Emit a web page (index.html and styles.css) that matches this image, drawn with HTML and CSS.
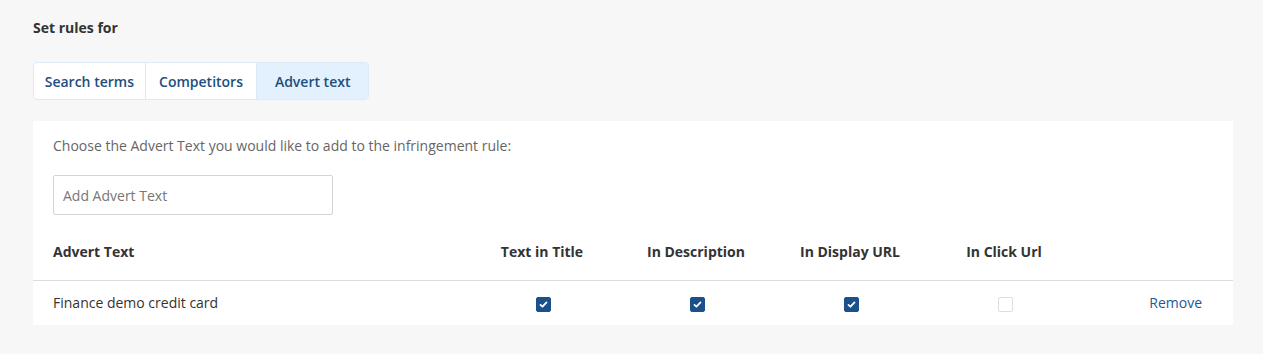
FILE: index.html
```html
<!DOCTYPE html>
<html lang="en">
<head>
    <meta charset="UTF-8">
    <title>Set rules</title>
    <link rel="stylesheet" href="styles.css">
</head>
<body>
    <h4 class="title">Set rules for</h4>

    <!-- Abas -->
    <div class="tabs">
        <div class="tab">Search terms</div>
        <div class="tab">Competitors</div>
        <div class="tab active">Advert text</div>
    </div>

    <div class="panel">
        <div class="intro">
            <p class="hint">Choose the Advert Text you would like to add to the infringement rule:</p>
            <input class="text-input" type="text" placeholder="Add Advert Text">
        </div>

        <table class="rules">
            <thead>
                <tr>
                    <th class="col-text">Advert Text</th>
                    <th>Text in Title</th>
                    <th>In Description</th>
                    <th>In Display URL</th>
                    <th>In Click Url</th>
                    <th class="col-action"></th>
                </tr>
            </thead>
            <tbody>
                <tr>
                    <td class="col-text">Finance demo credit card</td>
                    <td><span class="check on"><svg viewBox="0 0 16 16"><path d="M4.3 8.4l2.4 2.3 5-5.3" fill="none" stroke="#fff" stroke-width="2.2" stroke-linecap="round" stroke-linejoin="round"/></svg></span></td>
                    <td><span class="check on"><svg viewBox="0 0 16 16"><path d="M4.3 8.4l2.4 2.3 5-5.3" fill="none" stroke="#fff" stroke-width="2.2" stroke-linecap="round" stroke-linejoin="round"/></svg></span></td>
                    <td><span class="check on"><svg viewBox="0 0 16 16"><path d="M4.3 8.4l2.4 2.3 5-5.3" fill="none" stroke="#fff" stroke-width="2.2" stroke-linecap="round" stroke-linejoin="round"/></svg></span></td>
                    <td><span class="check"></span></td>
                    <td class="col-action"><a class="remove" href="#">Remove</a></td>
                </tr>
            </tbody>
        </table>
    </div>
</body>
</html>
```

FILE: styles.css
```css
body {
    font-family: 'Open Sans', sans-serif;
    background-color: #f7f7f7;
    color: #333;
    margin: 0;
    padding: 19px 30px 0 33px;
}

.title {
    font-size: 14px;
    font-weight: 700;
    line-height: 18px;
    margin: 0 0 25px;
    color: #333;
}

/* Abas */
.tabs {
    display: flex;
    width: 336px;
    height: 38px;
    border: 1px solid #dceaf8;
    border-radius: 4px;
    box-sizing: border-box;
    overflow: hidden;
    background-color: #fff;
}

.tab {
    width: 112px;
    display: flex;
    align-items: center;
    justify-content: center;
    font-size: 14px;
    font-weight: 600;
    color: #1c4f7e;
    border-right: 1px solid #dceaf8;
}

.tab:last-child {
    border-right: none;
}

.tab.active {
    background-color: #e3f0fd;
}

/* Painel */
.panel {
    margin-top: 21px;
    background-color: #fff;
    width: 1200px;
}

.intro {
    padding: 16px 20px 0;
}

.hint {
    font-size: 14px;
    line-height: 18px;
    color: #666;
    margin: 0 0 20px;
}

.text-input {
    width: 280px;
    height: 40px;
    box-sizing: border-box;
    border: 1px solid #d4d4d4;
    border-radius: 2px;
    padding: 0 9px;
    font-family: 'Open Sans', sans-serif;
    font-size: 14px;
    color: #333;
    outline: none;
}

.text-input::placeholder {
    color: #777;
}

/* Tabela */
.rules {
    width: 100%;
    border-collapse: collapse;
    table-layout: fixed;
}

.rules th,
.rules td {
    font-size: 14px;
    line-height: 18px;
    text-align: center;
    padding: 0;
}

.rules th {
    font-weight: 700;
    color: #333;
    width: 154px;
    padding: 28px 0 19px;
    border-bottom: 1px solid #dcdcdc;
}

.rules td {
    height: 44px;
    vertical-align: middle;
}

.rules .col-text {
    width: 412px;
    text-align: left;
    padding-left: 20px;
}

.rules .col-action {
    width: auto;
    text-align: right;
    padding-right: 31px;
}

.check {
    display: inline-block;
    width: 15px;
    height: 15px;
    box-sizing: border-box;
    border: 1px solid #dedede;
    border-radius: 2px;
    vertical-align: middle;
    background-color: #fff;
    margin-left: 2px;
}

.check.on {
    background-color: #1b5188;
    border-color: #1b5188;
}

.check svg {
    display: block;
    width: 13px;
    height: 13px;
}

.remove {
    color: #1b5a92;
    text-decoration: none;
}
```
